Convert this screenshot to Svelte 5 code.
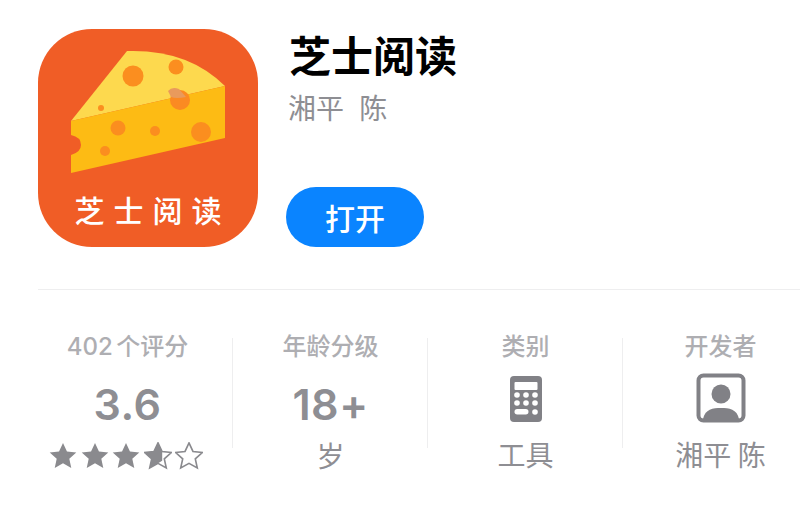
<script>
  const stats = [
    { label: "402 个评分", kind: "rating", value: "3.6" },
    { label: "年龄分级", kind: "age", value: "18+", sub: "岁" },
    { label: "类别", kind: "calc", sub: "工具" },
    { label: "开发者", kind: "dev", sub: "湘平 陈" },
  ];
  const star = "M12 .8l3.4 7.3 8 .9-6 5.4 1.7 7.9L12 18.3l-7.1 4 1.7-7.9-6-5.4 8-.9z";
  const halfStar = "M12 .8l3.4 7.3 .2 .1V16L12 18.3l-7.1 4 1.7-7.9-6-5.4 8-.9z";
</script>

<div class="page">
  <div class="header">
    <div class="icon">
      <svg class="cheese" viewBox="0 0 220 218" width="220" height="218">
        <path d="M33 92 L89 22 Q150 20 187 57 Z" fill="#fdd94e" />
        <path d="M33 92 L187 57 V109 L33 144 V126 Q43 123 43 116 Q43 108 33 106 Z" fill="#fdbb14" />
        <circle cx="95" cy="47" r="10.5" fill="#fb8e1f" />
        <circle cx="138" cy="38" r="7.5" fill="#fb8e1f" />
        <circle cx="63" cy="79" r="3" fill="#fb8e1f" />
        <circle cx="142" cy="71" r="10" fill="#fb8a22" />
        <path d="M130 62 Q134 57 141 60 L148 68 Q138 70 133 68 Z" fill="#e99a5c" />
        <circle cx="80" cy="99" r="7.5" fill="#fb8e1f" />
        <circle cx="117" cy="102" r="5" fill="#fb8e1f" />
        <circle cx="163" cy="103" r="10" fill="#fb8e1f" />
        <circle cx="67" cy="122" r="5" fill="#fb8e1f" />
      </svg>
      <div class="icon-text">芝士阅读</div>
    </div>
    <div class="meta">
      <div class="title">芝士阅读</div>
      <div class="author">湘平 陈</div>
      <button class="open">打开</button>
    </div>
  </div>

  <div class="stats">
    {#each stats as s}
      <div class="col">
        <div class="label">{s.label}</div>
        {#if s.kind === "rating"}
          <div class="value">{s.value}</div>
          <div class="stars">
            {#each [0, 1, 2] as i}
              <svg viewBox="0 0 24 24" width="28" height="28"><path d={star} fill="#8a8a8e" /></svg>
            {/each}
            <svg viewBox="0 0 24 24" width="28" height="28">
              <path d={star} fill="none" stroke="#8a8a8e" stroke-width="1.4" />
              <path d={halfStar} fill="#8a8a8e" />
            </svg>
            <svg viewBox="0 0 24 24" width="28" height="28">
              <path d={star} fill="none" stroke="#8a8a8e" stroke-width="1.4" />
            </svg>
          </div>
        {:else if s.kind === "age"}
          <div class="value">{s.value}</div>
          <div class="sub">{s.sub}</div>
        {:else if s.kind === "calc"}
          <svg class="glyph" viewBox="0 0 32 46" width="32" height="46">
            <rect width="32" height="46" rx="4" fill="#818186" />
            <rect x="4.5" y="6" width="23" height="8" rx="1" fill="#fff" />
            {#each [19, 27] as y}
              {#each [7, 16, 25] as x}
                <circle cx={x} cy={y} r="2.8" fill="#fff" />
              {/each}
            {/each}
            <rect x="4.5" y="33" width="14" height="5.4" rx="2.7" fill="#fff" />
            <circle cx="25" cy="36" r="2.8" fill="#fff" />
          </svg>
          <div class="sub calc-sub">{s.sub}</div>
        {:else}
          <svg class="glyph dev-glyph" viewBox="0 0 50 50" width="50" height="50">
            <rect x="2.5" y="2.5" width="45" height="45" rx="5" fill="#fff" stroke="#818186" stroke-width="4" />
            <circle cx="25" cy="21" r="9.5" fill="#818186" />
            <path d="M7 46 C9 36 17 35 25 35 C33 35 41 36 43 46 Z" fill="#818186" />
          </svg>
          <div class="sub dev-sub">{s.sub}</div>
        {/if}
      </div>
    {/each}
  </div>
</div>

<style>
  :global(body) {
    margin: 0;
    background: #fff;
  }

  .page {
    width: 800px;
    height: 523px;
    overflow: hidden;
    font-family: "Noto Sans CJK SC", "Liberation Sans", sans-serif;
    padding-left: 38px;
    box-sizing: border-box;
  }

  .header {
    display: flex;
    padding-top: 29px;
    height: 290px;
    box-sizing: border-box;
    border-bottom: 1px solid #eeeeef;
  }

  .icon {
    position: relative;
    width: 220px;
    height: 218px;
    border-radius: 54px;
    background: #f05d26;
    flex: none;
  }

  .cheese {
    display: block;
  }

  .icon-text {
    position: absolute;
    left: 0;
    right: 0;
    top: 159px;
    text-align: center;
    color: #fff;
    font-size: 30px;
    line-height: 42px;
    letter-spacing: 9px;
    text-indent: 9px;
    font-weight: 500;
  }

  .meta {
    margin-left: 28px;
    margin-top: -3px;
    display: flex;
    flex-direction: column;
    align-items: flex-start;
  }

  .title {
    font-size: 42px;
    line-height: 56px;
    font-weight: 700;
    color: #000;
    margin-left: 3px;
  }

  .author {
    font-size: 28px;
    line-height: 46px;
    color: #8e8e93;
    margin-left: 2px;
    word-spacing: 9px;
    margin-top: 2px;
  }

  .open {
    margin-top: 57px;
    width: 138px;
    height: 60px;
    border: none;
    border-radius: 30px;
    background: #0a84ff;
    color: #fff;
    font-family: inherit;
    font-size: 30px;
    font-weight: 500;
    padding: 0;
  }

  .stats {
    display: flex;
    padding-top: 36px;
  }

  .col {
    position: relative;
    width: 195px;
    flex: none;
    display: flex;
    flex-direction: column;
    align-items: center;
    box-sizing: border-box;
  }

  .col:first-child {
    margin-left: -2px;
    padding-right: 14px;
    width: 197px;
  }

  .col:not(:last-child)::after {
    content: "";
    position: absolute;
    right: 0;
    top: 12px;
    height: 110px;
    width: 1px;
    background: #eeeeef;
  }

  .label {
    font-family: Inter, "Noto Sans CJK SC", sans-serif;
    font-size: 24px;
    line-height: 42px;
    font-weight: 500;
    color: #aeaeb2;
    white-space: nowrap;
    word-spacing: -3px;
  }

  .value {
    font-family: Inter, "Liberation Sans", sans-serif;
    font-size: 43px;
    line-height: 50px;
    font-weight: 600;
    letter-spacing: 0.5px;
    color: #8e8e93;
    margin-top: 11px;
  }

  .stars {
    display: flex;
    gap: 3.5px;
    margin-top: 13px;
    margin-left: -3px;
  }

  .stars svg {
    display: block;
  }

  .sub {
    font-size: 28px;
    line-height: 40px;
    color: #8e8e93;
    margin-top: 6px;
    white-space: nowrap;
  }

  .calc-sub {
    margin-top: 12px;
  }

  .dev-sub {
    margin-top: 11px;
  }

  .glyph {
    display: block;
    margin-top: 8px;
  }

  .dev-glyph {
    margin-top: 5px;
  }
</style>
